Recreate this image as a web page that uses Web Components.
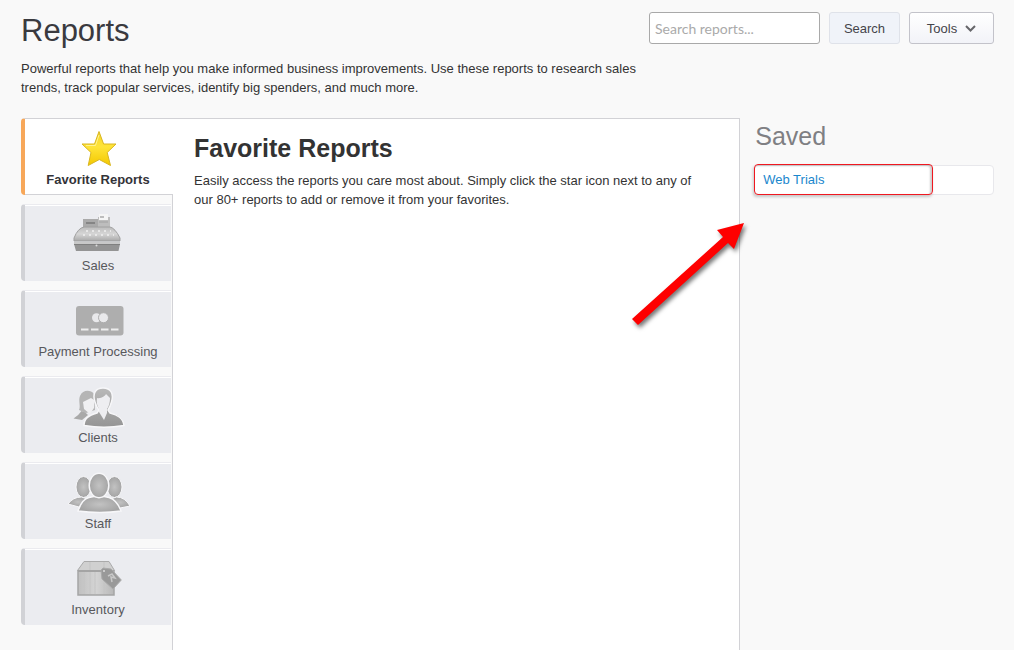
<!DOCTYPE html>
<html lang="en">
<head>
<meta charset="utf-8">
<meta name="viewport" content="width=device-width, initial-scale=1">
<title>Reports</title>
<style>
  body { margin: 0; background: #f9f9f9; color: #333; font: 13px/19px "Liberation Sans", Arial, sans-serif; }
</style>
</head>
<body>
<reports-page></reports-page>

<template id="page-template">
  <style>
    :host { display: flex; flex-direction: column; box-sizing: border-box; min-height: 100vh; padding: 12px 20px 0 21px; }
    header { display: flex; justify-content: space-between; align-items: flex-start; }
    h1 { margin: 0; font-size: 31px; line-height: 38px; font-weight: normal; color: #3a3a3f; }
    .intro { margin: 9px 0 21px; max-width: 640px; }
    main { flex: 1; display: grid; grid-template-columns: minmax(0, 3fr) minmax(0, 1fr); gap: 14px; }
  </style>
  <header>
    <h1>Reports</h1>
    <report-toolbar></report-toolbar>
  </header>
  <p class="intro">Powerful reports that help you make informed business improvements. Use these reports to research sales trends, track popular services, identify big spenders, and much more.</p>
  <main>
    <report-panel>
      <report-tab slot="tabs" icon="star" active>Favorite Reports</report-tab>
      <report-tab slot="tabs" icon="register">Sales</report-tab>
      <report-tab slot="tabs" icon="card">Payment Processing</report-tab>
      <report-tab slot="tabs" icon="clients">Clients</report-tab>
      <report-tab slot="tabs" icon="staff">Staff</report-tab>
      <report-tab slot="tabs" icon="box">Inventory</report-tab>
      <span slot="title">Favorite Reports</span>
      <span slot="text">Easily access the reports you care most about. Simply click the star icon next to any of our 80+ reports to add or remove it from your favorites.</span>
    </report-panel>
    <saved-reports>Web Trials</saved-reports>
  </main>
</template>

<template id="toolbar-template">
  <style>
    :host { display: block; }
    form { display: flex; gap: 9px; margin: 0; }
    input, button { box-sizing: border-box; height: 32px; margin: 0; border-radius: 3px; }
    input { width: 171px; padding: 0 5px; border: 1px solid #a9a9a9; background: #fff; color: #333; font: 14px Lato, sans-serif; }
    input::placeholder { color: #aaa; opacity: 1; }
    button { font: 13px "Liberation Sans", Arial, sans-serif; color: #44444a; }
    .search { width: 71px; padding: 0; border: 1px solid #dfe2e9; background: #f0f3f9; }
    .tools { display: flex; align-items: center; justify-content: center; gap: 8px; width: 85px; padding: 0; border: 1px solid #c3c3ca; background: linear-gradient(#fff, #f2f3f8); }
  </style>
  <form role="search">
    <input type="search" aria-label="Search reports" placeholder="Search reports...">
    <button class="search" type="button">Search</button>
    <button class="tools" type="button" aria-haspopup="menu">Tools
      <svg width="11" height="8" viewBox="0 0 11 8" aria-hidden="true"><path d="M1 2l4.500 4.500L10 2" fill="none" stroke="#66666a" stroke-width="2"/></svg>
    </button>
  </form>
</template>

<template id="panel-template">
  <style>
    :host { display: grid; grid-template-columns: 152px minmax(0, 1fr); }
    nav { display: flex; flex-direction: column; gap: 9px; padding-right: 1px; border-right: 1px solid #d2d2d6; }
    section { padding: 14px 32px 20px 21px; border: solid #d2d2d6; border-width: 1px 1px 0 0; background: #fff; }
    h2 { margin: 0 0 8px; font-size: 25px; line-height: 30px; }
    p { margin: 0; }
  </style>
  <nav aria-label="Report categories"><slot name="tabs"></slot></nav>
  <section>
    <h2><slot name="title"></slot></h2>
    <p><slot name="text"></slot></p>
  </section>
</template>

<template id="tab-template">
  <style>
    :host { display: block; }
    button {
      display: flex; flex-direction: column; align-items: center; box-sizing: border-box;
      width: 100%; height: 77px; margin: 0; padding: 5px 0 0;
      border: 0 solid #d1d2d6; border-width: 1px 0 0 4px; border-top-color: #ebebef; border-radius: 4px 0 0 4px;
      background: #ebecf0; box-shadow: inset 0 1px #fff;
      font: 13px/20px "Liberation Sans", Arial, sans-serif; color: #58585c; white-space: nowrap;
    }
    svg { display: block; width: 64px; height: 46px; flex: none; }
    :host([active]) { position: relative; margin-right: -2px; }
    :host([active]) button { background: #fff; color: #333338; font-weight: bold; border-left-color: #f7a759; border-top-color: #d2d2d6; box-shadow: inset 0 -1px #d2d2d6; padding-right: 2px; }
  </style>
  <button type="button"><svg viewBox="0 0 64 46" aria-hidden="true"></svg><slot></slot></button>
</template>

<template id="saved-template">
  <style>
    :host { display: block; position: relative; padding-top: 3px; }
    h2 { margin: 0 0 14px; padding-left: 1px; font-size: 25px; line-height: 30px; font-weight: normal; color: #7f7f83; }
    ul { margin: 0; padding: 0; list-style: none; }
    li { position: relative; box-sizing: border-box; height: 30px; padding: 4px 8px; border: 1px solid #e8e8ec; border-radius: 4px; background: #fff; }
    a { color: #1a87cd; text-decoration: none; }
    .mark { position: absolute; left: -1px; top: -2px; width: 179px; height: 31px; box-sizing: border-box; border: 1px solid #f01820; border-radius: 4px; box-shadow: -1px 2px 3px #0003, inset -2px 1px 2px #0003; pointer-events: none; }
    .arrow { position: absolute; left: -126px; top: 100px; width: 120px; height: 112px; pointer-events: none; filter: drop-shadow(2px 3px 2px #0008); }
  </style>
  <h2>Saved</h2>
  <ul><li><a href="#web-trials"><slot></slot></a><span class="mark"></span></li></ul>
  <svg class="arrow" viewBox="0 0 120 112" aria-hidden="true"><path d="M116 5L106 31L100 25L10 107L4 101L95 19L89 12Z" fill="#fe0000"/></svg>
</template>

<script>
  const icons = {
    star: `<defs><linearGradient id="g" x2="0" y2="1"><stop stop-color="#f5d52a"/><stop offset=".45" stop-color="#ffe438"/><stop offset="1" stop-color="#f3c800"/></linearGradient></defs>
      <path d="M33 7.500L37.600 20H50L41.200 28.500L44.500 41.500L33.300 35.500L22.200 41.500L25 28.500L16 20H28.500Z" fill="url(#g)" stroke="#d9b620" stroke-linejoin="round"/>
      <path d="M33 11L29.500 21.500H20" fill="none" stroke="#fff390"/>`,
    register: `<defs><linearGradient id="g" x2="0" y2="1"><stop stop-color="#bcbcbc"/><stop offset=".5" stop-color="#d6d6d6"/><stop offset="1" stop-color="#a8a8a8"/></linearGradient></defs>
      <path d="M17 9H33V19H17Z" fill="#aaa"/><path d="M20 13H29" stroke="#858585" stroke-width="2"/>
      <path d="M32 7H44V18H32Z" fill="#bdbdbd"/><path d="M33 4H42V10H33Z" fill="#f5f5f5"/><path d="M34 7H38M33 12H42" stroke="#aaa" stroke-width="1.500"/>
      <path d="M18 17H44Q49 18 54 28V31H8V28Q12 18 18 17Z" fill="url(#g)" stroke="#a0a0a0"/>
      <path d="M20 21H45M17 25H48" stroke="#f0f0f0" stroke-width="1.500" stroke-dasharray="2 4"/>
      <path d="M8 32H54V34H8Z" fill="#c8c8c8"/><path d="M8 34H54L52.500 41H10Z" fill="#949494"/><path d="M8 34.500H54" stroke="#808080"/><circle cx="30.500" cy="35.500" r="1" fill="#ddd"/>`,
    card: `<rect x="10" y="10" width="47.500" height="29.500" rx="3" fill="#aeaeae"/>
      <circle cx="30.500" cy="21.700" r="4.500" fill="#e9e9eb"/><circle cx="37.500" cy="21.700" r="5" fill="#e9e9eb" stroke="#aeaeae"/>
      <path d="M15 33.500H22.500M25 33.500H32.500M35 33.500H42.500M45 33.500H52.500" stroke="#eee" stroke-width="2"/>`,
    clients: `<defs><linearGradient id="g" x2="0" y2="1"><stop stop-color="#b9b9b9"/><stop offset="1" stop-color="#959595"/></linearGradient></defs>
      <path d="M13 28C15 24 12 19 14 14C17 7 25 8 28 12L29 28L20 31Z" fill="#b5b5b5"/>
      <path d="M17 20L25 16L28 18V26L24 32L18 27Z" fill="#f0f0f2"/><path d="M7.500 36.500Q13 33 15.500 29Q20 30 22 33L16 38Z" fill="#a9a9a9"/>
      <path d="M18 43.500C18 36 23 33.500 31 31L33 28Q30 24 29 20C26 11 30 6 37 6C45 6 48 12 45.500 20Q44 25 42 28L44 31C52 33 57 36 58 43.500Q38 47 18 43.500Z" fill="url(#g)" stroke="#f7f7f9" stroke-width="1.500"/>
      <path d="M31 16C35 17 39 14 40 12L44 16Q44 23 41 27V31L38 38L33 30V27Q30 22 31 16Z" fill="#eeeef1"/>`,
    staff: `<defs><radialGradient id="g"><stop stop-color="#c2c2c2"/><stop offset="1" stop-color="#a4a4a4"/></radialGradient></defs>
      <g fill="url(#g)" stroke="#f7f7f9" stroke-width="1"><ellipse cx="17.500" cy="19" rx="7.500" ry="10.500"/><ellipse cx="48.500" cy="19" rx="7.500" ry="10.500"/>
      <path d="M2 36Q7 29 15.500 29Q21 30 22 33L13 39Z"/><path d="M64 38Q59 29 50.500 29Q45 30 44 33L54 40Z"/>
      <path d="M12 43Q16 31 23 29.500Q33 27 43 29.500Q51 32 55 43Q34 46 12 43Z" stroke-width="1.500"/><ellipse cx="33" cy="17.500" rx="9.800" ry="12.200" stroke-width="1.500"/></g>`,
    box: `<defs><linearGradient id="g"><stop stop-color="#c0c0c0"/><stop offset=".5" stop-color="#d4d4d4"/><stop offset="1" stop-color="#b8b8b8"/></linearGradient></defs>
      <path d="M11.500 16.500L18 7.500H43L48.500 16.500Z" fill="#d0d0d0" stroke="#aaa"/><path d="M12 17H48V41H12Z" fill="url(#g)" stroke="#a5a5a5" stroke-width="1.500"/>
      <path d="M18 18V40M24 8V40M38 8V40M29 18V40" stroke="#c4c4c4"/><path d="M12 17H48" stroke="#a4a4a4" stroke-width="2"/>
      <path d="M35 16L37 14L45 15L55.300 26L47 35L36 25Z" fill="#999" stroke="#aaa" stroke-linejoin="round"/><circle cx="38" cy="17" r="1" fill="#ddd"/><path d="M42 22L46 20L49 24L45 23L46 28" fill="none" stroke="#c8c8c8" stroke-width="1.500"/>`
  };

  class TemplateElement extends HTMLElement {
    connectedCallback() {
      if (this.shadowRoot) return;
      const source = document.getElementById(this.constructor.template);
      this.attachShadow({ mode: 'open' }).append(source.content.cloneNode(true));
      this.ready();
    }
    ready() {}
  }
  class ReportToolbar extends TemplateElement { static template = 'toolbar-template'; }
  class ReportPanel extends TemplateElement { static template = 'panel-template'; }
  class SavedReports extends TemplateElement { static template = 'saved-template'; }
  class ReportTab extends TemplateElement {
    static template = 'tab-template';
    ready() {
      this.shadowRoot.querySelector('svg').innerHTML = icons[this.getAttribute('icon')];
      if (this.hasAttribute('active')) this.shadowRoot.querySelector('button').setAttribute('aria-current', 'true');
    }
  }
  class ReportsPage extends TemplateElement { static template = 'page-template'; }
  customElements.define('report-toolbar', ReportToolbar);
  customElements.define('report-tab', ReportTab);
  customElements.define('report-panel', ReportPanel);
  customElements.define('saved-reports', SavedReports);
  customElements.define('reports-page', ReportsPage);
</script>
</body>
</html>
